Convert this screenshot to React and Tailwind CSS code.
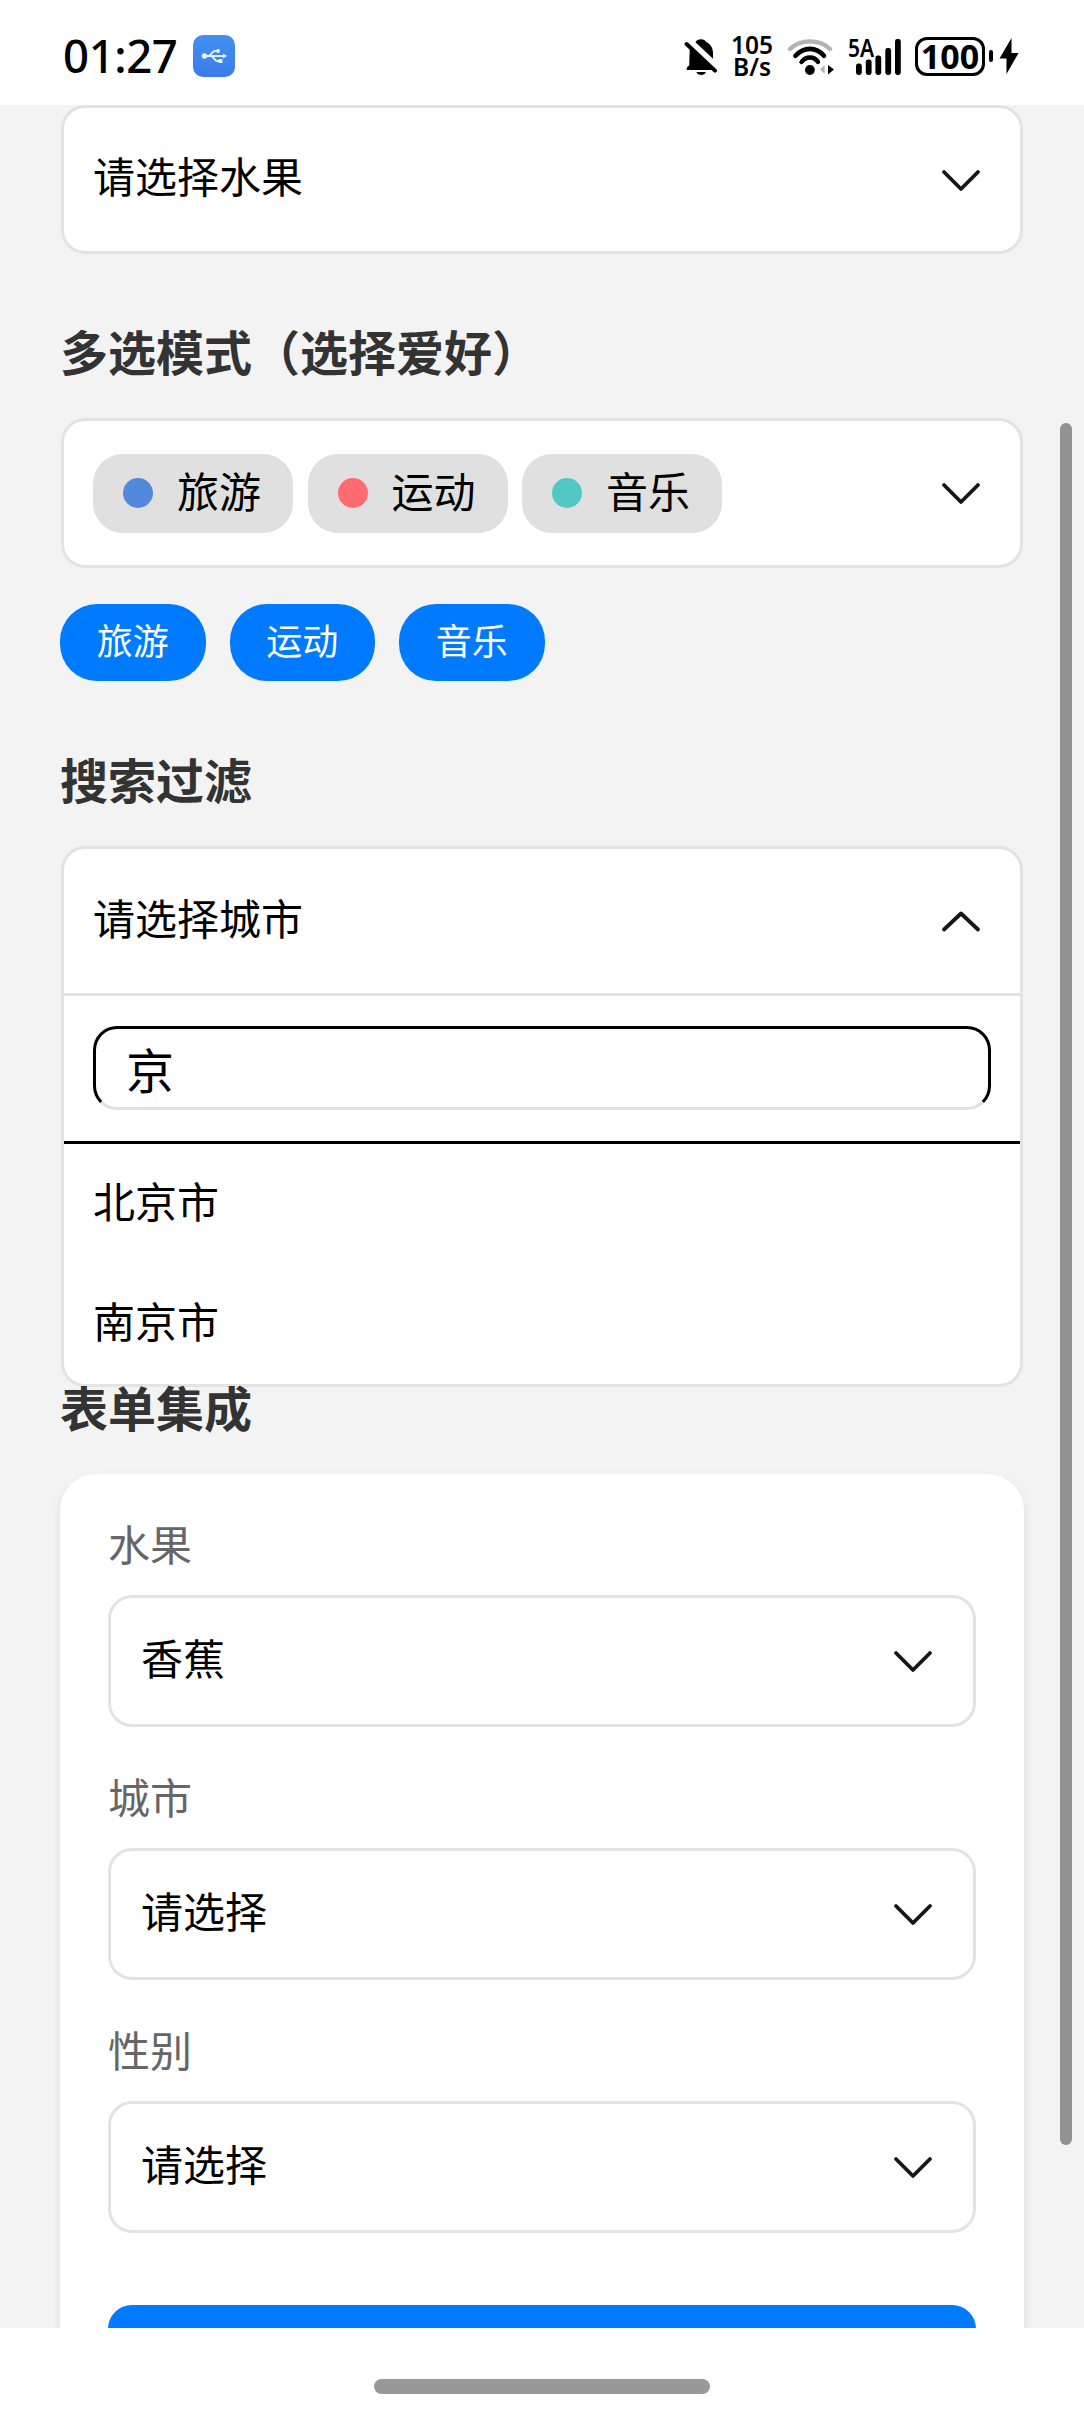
import React, { useState } from 'react';

const hobbies = [
  { name: '旅游', dot: 'bg-[#5289da]' },
  { name: '运动', dot: 'bg-[#ff6b6e]' },
  { name: '音乐', dot: 'bg-[#52c8c5]' },
];

const cities = ['北京市', '上海市', '南京市', '广州市', '深圳市'];

const formFields = [
  { label: '水果', value: '香蕉' },
  { label: '城市', value: '' },
  { label: '性别', value: '' },
];

function Chevron({ up }) {
  return (
    <svg className="w-[40px] h-[24px] shrink-0" viewBox="0 0 40 24" fill="none">
      <path
        d={up ? 'M3 20.5 L20 4.5 L37 20.5' : 'M3 4 L20 21 L37 4'}
        stroke="#161616"
        strokeWidth="3.8"
        strokeLinecap="round"
        strokeLinejoin="round"
      />
    </svg>
  );
}

function UsbBadge() {
  return (
    <div className="ml-[14px] w-[42px] h-[42px] rounded-[10px] bg-linear-to-b from-[#4390f0] to-[#3b7be9] flex items-center justify-center">
      <svg className="w-[26px] h-[16px]" viewBox="0 0 26 16" fill="none" stroke="#e4f4ff" strokeWidth="2">
        <circle cx="3.5" cy="8" r="2.8" fill="#e4f4ff" stroke="none" />
        <path d="M4 8 H23" />
        <path d="M7 8 C10 8 11 3 14 3 H16" />
        <path d="M10 8 C13 8 13 13 16 13 H18" />
        <circle cx="17" cy="3" r="2" fill="#e4f4ff" stroke="none" />
        <rect x="17.5" y="11" width="4" height="4" fill="#e4f4ff" stroke="none" />
        <path d="M22 5.5 L26 8 L22 10.5 Z" fill="#e4f4ff" stroke="none" />
      </svg>
    </div>
  );
}

function BellOff() {
  return (
    <svg className="w-[34px] h-[38px]" viewBox="0 0 34 38">
      {/* right side of the bell, above the slash */}
      <path
        d="M11.5 5.2 C12.3 3.6 14 2.2 17 2.2 C20 2.2 21.2 3.4 21.8 4.8 C26 6.6 29 10.5 29 16 V21.8 Z"
        fill="#000"
      />
      {/* left side, below the slash */}
      <path d="M5.8 11.5 L29.5 33 H2.6 C2.4 30.5 3.4 29.6 5.2 28.4 Z" fill="#000" />
      <path d="M12.4 35 H22 C21 37.2 19.4 38 17.2 38 C15 38 13.4 37.2 12.4 35 Z" fill="#000" />
      <path d="M2.6 7 L31 33.6" stroke="#000" strokeWidth="4" strokeLinecap="round" />
    </svg>
  );
}

function Wifi() {
  return (
    <svg className="w-[48px] h-[38px]" viewBox="0 0 48 38" fill="none" strokeLinecap="round">
      <path d="M3 12 C13.5 1.8 32.5 1.8 43 12" stroke="#b3b3b3" strokeWidth="4.4" />
      <path d="M8.5 18.8 C17 9.6 29 9.6 37 18.8" stroke="#000" strokeWidth="4.6" />
      <path d="M14.5 25 C19 19 27 19 31 25" stroke="#000" strokeWidth="4.4" />
      <circle cx="22.9" cy="33" r="4.9" fill="#000" />
      <path d="M37.6 28 V37 L33 32.5 Z" fill="#b3b3b3" />
      <path d="M41 28 L47 32.5 L41 37.6 Z" fill="#000" />
    </svg>
  );
}

function Signal() {
  return (
    <svg className="w-[46px] h-[38px]" viewBox="0 0 46 38" fill="#000">
      <rect x="0" y="26.5" width="5.8" height="11.5" rx="2.4" />
      <rect x="9.8" y="22.5" width="5.8" height="15.5" rx="2.4" />
      <rect x="19.4" y="18.5" width="5.8" height="19.5" rx="2.4" />
      <rect x="29.3" y="11" width="5.8" height="27" rx="2.4" />
      <rect x="39" y="2" width="5.8" height="36" rx="2.4" />
    </svg>
  );
}

function StatusBar() {
  return (
    <header className="h-[105px] shrink-0 bg-white flex items-start justify-between pl-[63px] pr-[65px] text-black font-['Noto_Sans',sans-serif]">
      <div className="flex items-center pt-[35px] h-[77px]">
        <span className="w-[116px] text-[45.5px] leading-[40px] pb-[2px] font-medium tracking-[-0.4px]">01:27</span>
        <UsbBadge />
      </div>
      <div className="flex items-center pt-[35px] h-[77px]">
        <BellOff />
        <div className="ml-[13px] w-[42px] flex flex-col items-center text-[24.5px] leading-[22px] font-semibold pb-px">
          <span>105</span>
          <span>B/s</span>
        </div>
        <div className="ml-[14px]">
          <Wifi />
        </div>
        <div className="relative ml-[21px]">
          <Signal />
          <span className="absolute -left-[8.5px] top-0 origin-left scale-x-[0.84] text-[25px] leading-[20px] font-semibold">
            5A
          </span>
        </div>
        <div className="ml-[13px] w-[70px] h-[39px] rounded-[12px] border-3 border-black flex items-center justify-center text-[34px] leading-[34px] font-bold">
          100
        </div>
        <div className="ml-[4px] w-[4px] h-[12px] rounded-[2px] bg-black" />
        <svg className="ml-[6px] w-[20px] h-[38px]" viewBox="0 0 20 38">
          <path d="M12.5 1 L0.5 21.5 H7.5 V37 L19.5 16 H12.5 Z" fill="#000" />
        </svg>
      </div>
    </header>
  );
}

function SectionTitle({ children }) {
  return <h2 className="text-[48px] leading-[72px] font-bold text-[#333] mb-[32px]">{children}</h2>;
}

export default function App() {
  const [keyword, setKeyword] = useState('京');
  const [open, setOpen] = useState(true);

  const matched = cities.filter((city) => city.includes(keyword));

  return (
    <div className="w-[1084px] h-[2412px] flex flex-col overflow-hidden bg-white font-['Noto_Sans_CJK_SC',sans-serif] text-[42px] text-black">
      <StatusBar />

      <main className="relative h-[2223px] shrink-0 overflow-hidden bg-[#f3f3f3] px-[60px]">
        <div className="mx-px h-[149px] rounded-[24px] border-3 border-[#e3e3e3] bg-white flex items-center justify-between pl-[29px] pr-[39px]">
          <span className="leading-[60px] pb-[9px]">请选择水果</span>
          <Chevron />
        </div>

        <section className="mt-[60px]">
          <SectionTitle>多选模式（选择爱好）</SectionTitle>
          <div className="mx-px h-[150px] rounded-[24px] border-3 border-[#e3e3e3] bg-white flex items-center justify-between pl-[29px] pr-[39px]">
            <div className="flex gap-[14.5px]">
              {hobbies.map((hobby) => (
                <div key={hobby.name} className="w-[200px] h-[79px] rounded-[30px] bg-[#e0e0e0] flex items-center pl-[30px]">
                  <span className={`w-[30px] h-[30px] rounded-full ${hobby.dot}`} />
                  <span className="ml-[24px] leading-[60px] pb-[6px]">{hobby.name}</span>
                </div>
              ))}
            </div>
            <Chevron />
          </div>
          <div className="mt-[36px] flex gap-[24px]">
            {hobbies.map((hobby) => (
              <span
                key={hobby.name}
                className="w-[145.5px] h-[77px] rounded-[37px] bg-[#007aff] text-white text-[36px] leading-[71px] text-center"
              >
                {hobby.name}
              </span>
            ))}
          </div>
        </section>

        <section className="mt-[61px]">
          <SectionTitle>搜索过滤</SectionTitle>
          <div className="mx-px rounded-[24px] border-3 border-[#e3e3e3] bg-white overflow-hidden">
            <div
              className="h-[144px] flex items-center justify-between pl-[29px] pr-[39px]"
              onClick={() => setOpen(!open)}
            >
              <span className="leading-[60px] pb-[9px]">请选择城市</span>
              <Chevron up={open} />
            </div>
            {open && (
              <div className="border-t-3 border-[#e3e3e3]">
                <div className="px-[29px] pt-[30px] pb-[31px] border-b-3 border-black">
                  <input
                    className="block w-full h-[84px] rounded-[24px] border-3 border-black border-b-[#e0e0e0] pl-[30px] text-[48px] outline-none"
                    type="text"
                    value={keyword}
                    onChange={(e) => setKeyword(e.target.value)}
                  />
                </div>
                {matched.map((city) => (
                  <div key={city} className="h-[120px] pl-[29px] leading-[111px]">
                    {city}
                  </div>
                ))}
              </div>
            )}
          </div>
        </section>

        <section>
          <h2 className="text-[48px] leading-[38px] font-bold text-[#333] mb-[49px]">表单集成</h2>
          <div className="h-[1000px] rounded-[36px] bg-white px-[48px] pt-[39px] shadow-[0_6px_12px_rgba(0,0,0,0.09)]">
            {formFields.map((field) => (
              <div key={field.label}>
                <label className="block leading-[60px] text-[#666]">{field.label}</label>
                <div className="mt-[22px] mb-[39px] h-[132px] rounded-[24px] border-3 border-[#e3e3e3] flex items-center justify-between pl-[30px] pr-[40px]">
                  <span className="leading-[60px] pb-[9px]">{field.value || '请选择'}</span>
                  <Chevron />
                </div>
              </div>
            ))}
            <div className="pt-[33px]">
              <button type="submit" className="block w-full h-[132px] rounded-[24px] bg-[#007aff]" />
            </div>
          </div>
        </section>

        {/* scroll indicator */}
        <div className="absolute right-[12px] top-[318px] w-[12px] h-[1722px] rounded-full bg-[#929292]" />
      </main>

      <footer className="flex-1 bg-white flex justify-center pt-[51px]">
        <div className="w-[336px] h-[15px] rounded-full bg-[#999]" />
      </footer>
    </div>
  );
}
